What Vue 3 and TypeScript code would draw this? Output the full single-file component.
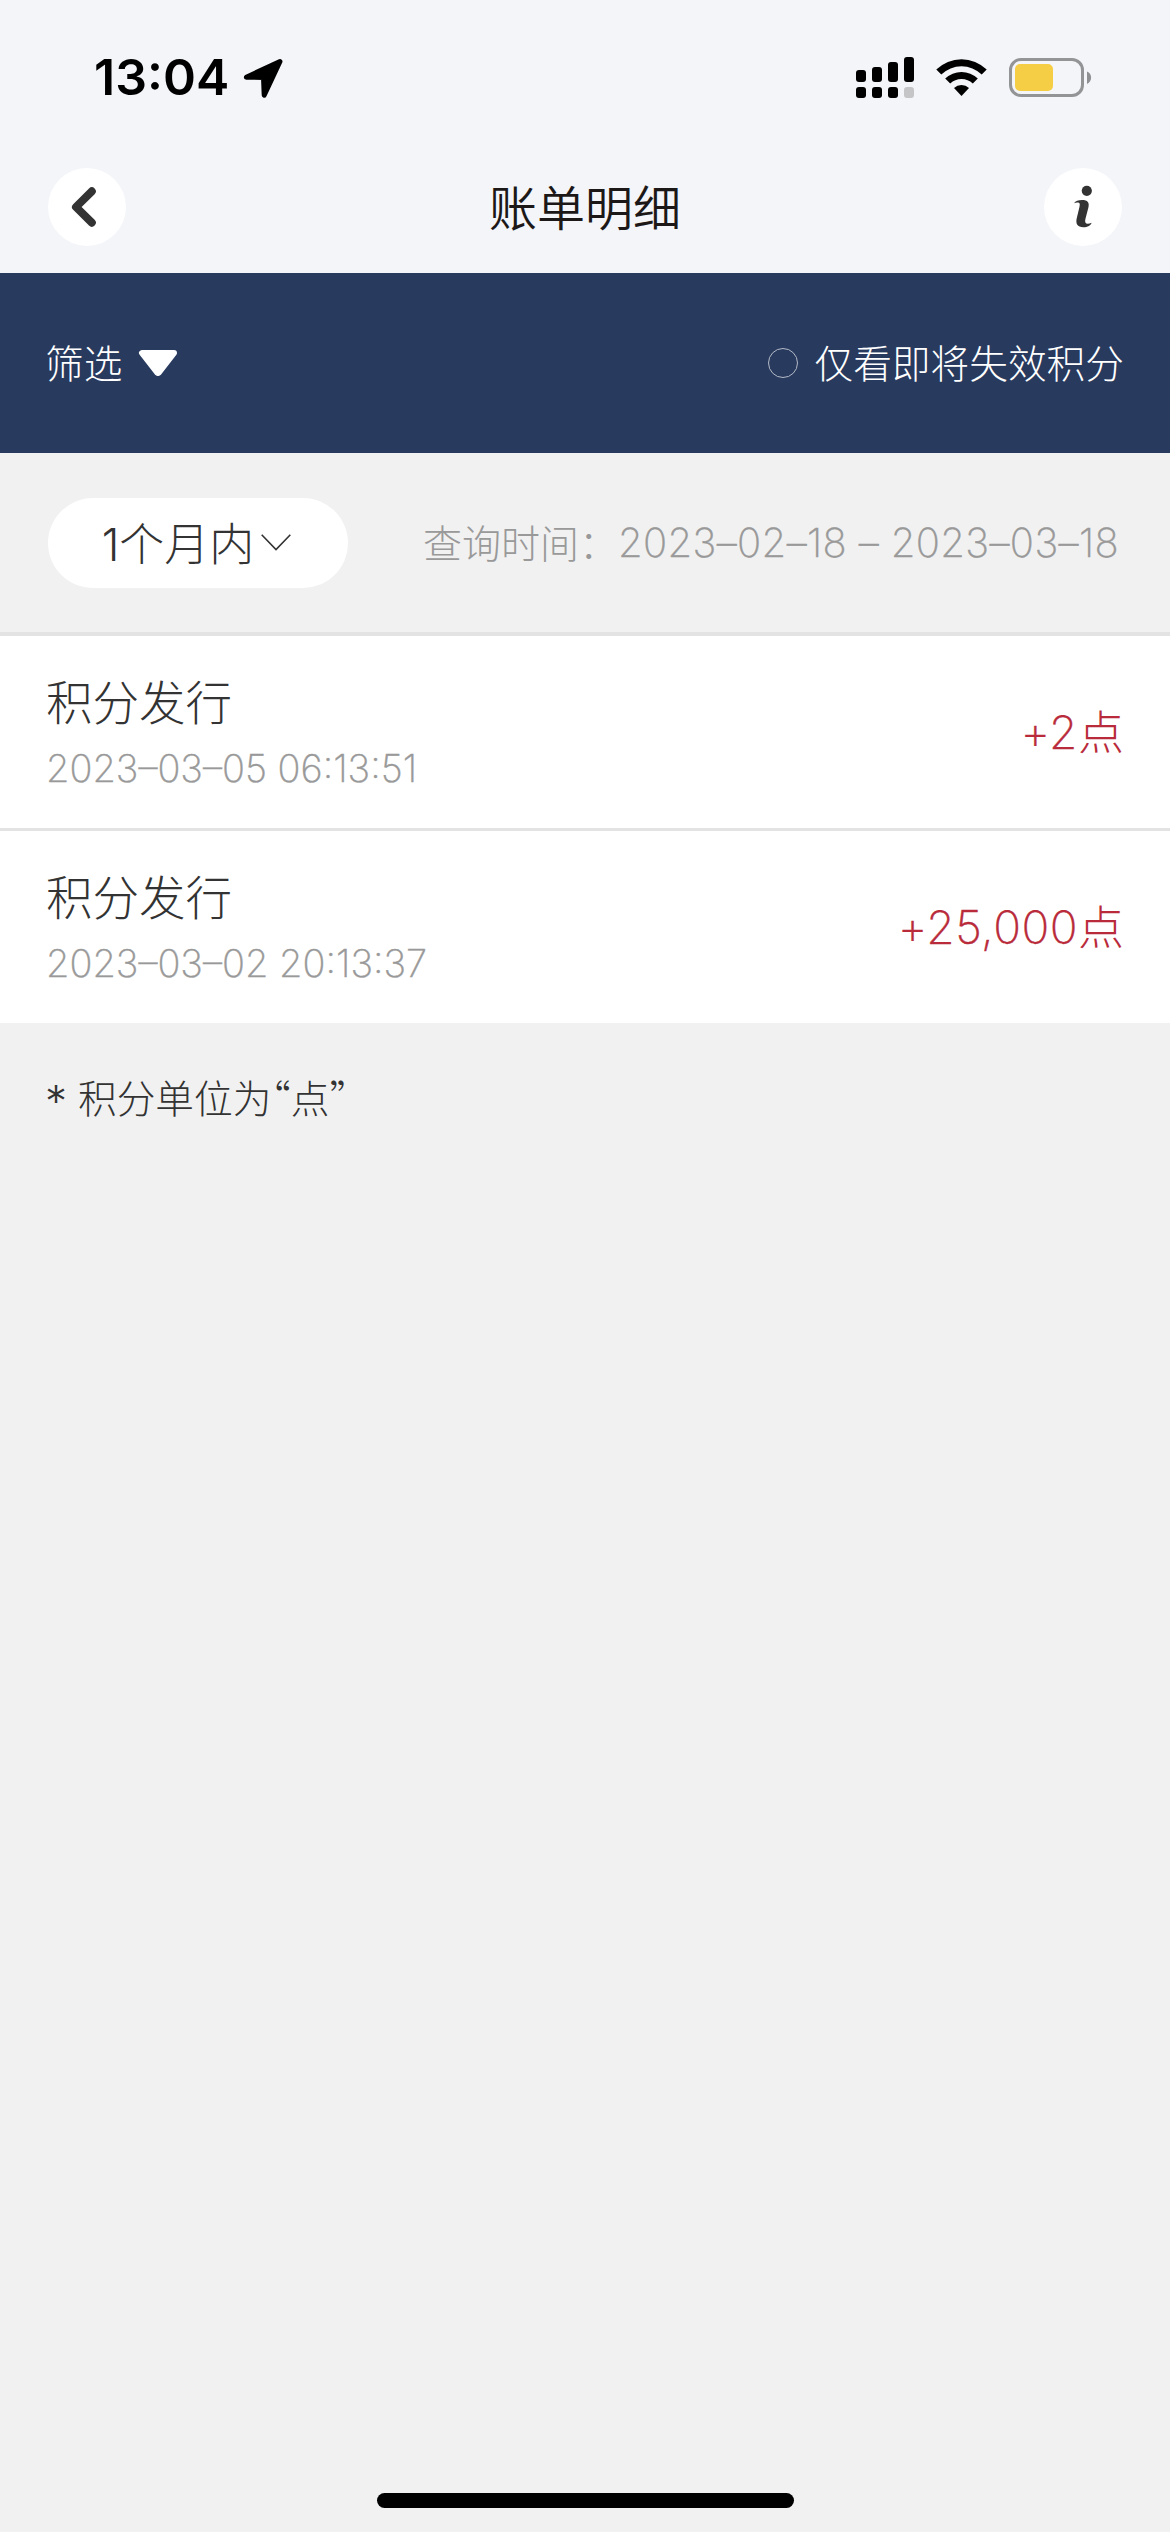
<script setup lang="ts">
interface Entry {
  title: string
  time: string
  amount: string
}

const entries: Entry[] = [
  { title: '积分发行', time: '2023–03–05 06:13:51', amount: '+2' },
  { title: '积分发行', time: '2023–03–02 20:13:37', amount: '+25,000' },
]
</script>

<template>
  <div class="screen">
    <header class="top">
      <div class="status">
        <div class="clock">
          <span class="time">13:04</span>
          <svg class="location" width="42" height="42" viewBox="0 0 42 42">
            <path d="M3.3 19.2 37 3.5 21.2 37.2 20.5 19.4z" fill="#000" stroke="#000" stroke-width="5" stroke-linejoin="round" />
          </svg>
        </div>
        <svg class="indicators" width="240" height="44" viewBox="854 55 240 44">
          <g>
            <rect x="856" y="70" width="10" height="12" rx="3" />
            <rect x="872" y="67" width="10" height="15" rx="3" />
            <rect x="888" y="62" width="10" height="20" rx="3" />
            <rect x="904" y="57" width="10" height="25" rx="3" />
            <rect x="856" y="87" width="10" height="11" rx="3" />
            <rect x="872" y="87" width="10" height="11" rx="3" />
            <rect x="888" y="87" width="10" height="11" rx="3" />
            <rect x="904" y="87" width="10" height="11" rx="3" fill="#c5c5c8" />
          </g>
          <path d="M936.3 69.6a36 36 0 0 1 50.4 0l-5 4.9a29 29 0 0 0-40.4 0z" />
          <path d="M945.2 78.6a23.5 23.5 0 0 1 32.6 0l-5 4.9a16.2 16.2 0 0 0-22.6 0z" />
          <path d="M954 87.9a11 11 0 0 1 15 0l-7.5 8z" />
          <rect x="1010.5" y="59.5" width="72" height="36" rx="10.5" fill="none" stroke="#939496" stroke-width="3" />
          <rect x="1015" y="64" width="38" height="27" rx="5" fill="#f6ce46" />
          <path d="M1087 71.5c5.5 2.4 5.5 10 0 12.4z" fill="#8f9092" />
        </svg>
      </div>
      <nav class="nav">
        <button class="round">
          <svg width="78" height="78" viewBox="0 0 78 78">
            <path d="M43.8 23.3 28 39 43.8 54.7" fill="none" stroke="#333" stroke-width="8" stroke-linecap="round" stroke-linejoin="round" />
          </svg>
        </button>
        <h1 class="title">账单明细</h1>
        <button class="round">
          <svg width="78" height="78" viewBox="0 0 78 78">
            <circle cx="42.8" cy="22.8" r="5.1" fill="#333" />
            <path d="M30 35.2C31.4 32.8 34.5 32 38 32c5.8 0 7.6 2.6 6.4 7.4l-3 11.6c-.8 3.2.1 4.7 2.2 4.7 1.5 0 2.8-.3 3.9-1-.3 2.6-4 4.5-8.1 4.5-6 0-8-3.5-6.6-9.2l2.6-10.8c.8-3.4.4-4.7-2-4.7-1.2 0-2.3.3-3.4.7z" fill="#333" />
          </svg>
        </button>
      </nav>
    </header>

    <section class="filter-bar">
      <div class="filter">
        <span class="label">筛选</span>
        <svg width="40" height="28" viewBox="0 0 40 28">
          <path d="M4 4h32L20.5 24h-1z" fill="#fff" stroke="#fff" stroke-width="6" stroke-linejoin="round" />
        </svg>
      </div>
      <label class="expiring"><i class="radio"></i><span class="label">仅看即将失效积分</span></label>
    </section>

    <section class="range">
      <div class="period">
        <span class="label"><b class="one">1</b>个月内</span>
        <svg width="30" height="18" viewBox="0 0 30 18">
          <path d="M.7.7 15 15.5 29.3.7" fill="none" stroke="#333" stroke-width="1.6" />
        </svg>
      </div>
      <p class="query"><span class="label">查询时间：</span><span class="dates">2023–02–18 – 2023–03–18</span></p>
    </section>

    <main>
      <article v-for="entry in entries" :key="entry.time" class="row">
        <div class="info">
          <span class="name">{{ entry.title }}</span>
          <span class="stamp">{{ entry.time }}</span>
        </div>
        <div class="amount"><span class="num">{{ entry.amount }}</span><span class="label">点</span></div>
      </article>
    </main>

    <p class="note"><span class="star">*</span>积分单位为<span class="quote">“</span>点<span class="quote">”</span></p>
    <div class="home"></div>
  </div>
</template>

<style>
body {
  margin: 0;
  background: #f1f1f1;
}
</style>

<style scoped>
.screen {
  width: 1170px;
  height: 2532px;
  box-sizing: border-box;
  display: flex;
  flex-direction: column;
  background: #f1f1f1;
  font-family: 'Noto Sans CJK SC', sans-serif;
  font-weight: 300;
  color: #333;
  overflow: hidden;
  white-space: nowrap;
}
.top {
  height: 273px;
  background: #f3f5f9;
}
.status {
  height: 155px;
  box-sizing: border-box;
  padding: 0 76px 0 94px;
  display: flex;
  justify-content: space-between;
}
.clock {
  display: flex;
}
.time {
  font: 600 50px/155px Inter, sans-serif;
  color: #000;
}
.location {
  margin-top: 58px;
  margin-left: 14px;
}
.indicators {
  margin-top: 55px;
}
.nav {
  height: 104px;
  padding: 0 48px;
  display: flex;
  align-items: center;
  justify-content: space-between;
}
.round {
  width: 78px;
  height: 78px;
  padding: 0;
  border: 0;
  border-radius: 50%;
  background: #fff;
}
.round svg {
  display: block;
}
.title {
  margin: 0;
  padding-bottom: 3px;
  font-size: 48px;
  font-weight: 350;
  line-height: 101px;
  color: #1c1818;
}
.label {
  padding-bottom: 4px;
}
.filter-bar {
  height: 180px;
  padding: 0 46px 0 45px;
  display: flex;
  align-items: center;
  justify-content: space-between;
  background: #283a5e;
  color: #fff;
  font-size: 38.7px;
}
.filter,
.expiring,
.period {
  display: flex;
  align-items: center;
}
.filter svg {
  margin-left: 15.5px;
}
.radio {
  width: 30px;
  height: 30px;
  box-sizing: border-box;
  margin-right: 16.5px;
  border: 1.5px solid #b5bbc8;
  border-radius: 50%;
}
.range {
  height: 179px;
  padding: 0 51px 0 48px;
  border-bottom: 4px solid #e3e3e3;
  display: flex;
  align-items: center;
  justify-content: space-between;
}
.period {
  width: 300px;
  height: 90px;
  box-sizing: border-box;
  padding-right: 3px;
  border-radius: 45px;
  background: #fff;
  justify-content: center;
  font-size: 45px;
  gap: 7px;
}
.period .label {
  padding-bottom: 3px;
}
.one {
  font-family: Inter, sans-serif;
  font-weight: 300;
}
.query {
  margin: 0;
  display: flex;
  align-items: center;
  font-size: 39px;
  color: #999;
}
.dates,
.stamp,
.num {
  font-family: Inter, sans-serif;
  font-weight: 200;
  -webkit-text-stroke: 0.4px currentColor;
}
.dates {
  font-size: 40px;
  letter-spacing: 0.37px;
}
.row {
  height: 192px;
  padding: 0 46px;
  display: flex;
  align-items: center;
  justify-content: space-between;
  background: #fff;
}
.row + .row {
  border-top: 3px solid #e3e3e3;
}
.info {
  display: flex;
  flex-direction: column;
  padding-top: 5px;
}
.name {
  font-size: 46.5px;
  line-height: 66px;
}
.stamp {
  font-size: 38px;
  line-height: 70px;
  color: #999;
}
.amount {
  display: flex;
  align-items: center;
  font-size: 46px;
  color: #b92b3a;
}
.num {
  letter-spacing: 0.5px;
}
.amount .label {
  padding-bottom: 6px;
}
.note {
  margin: 43px 0 0 45px;
  font-size: 38.7px;
  line-height: 60px;
}
.star {
  display: inline-block;
  width: 33px;
  font: 300 44px/40px Inter, sans-serif;
  vertical-align: -4px;
}
.quote {
  font-feature-settings: 'halt';
}
.home {
  width: 417px;
  height: 15px;
  margin: auto auto 24px;
  border-radius: 8px;
  background: #000;
}
</style>
